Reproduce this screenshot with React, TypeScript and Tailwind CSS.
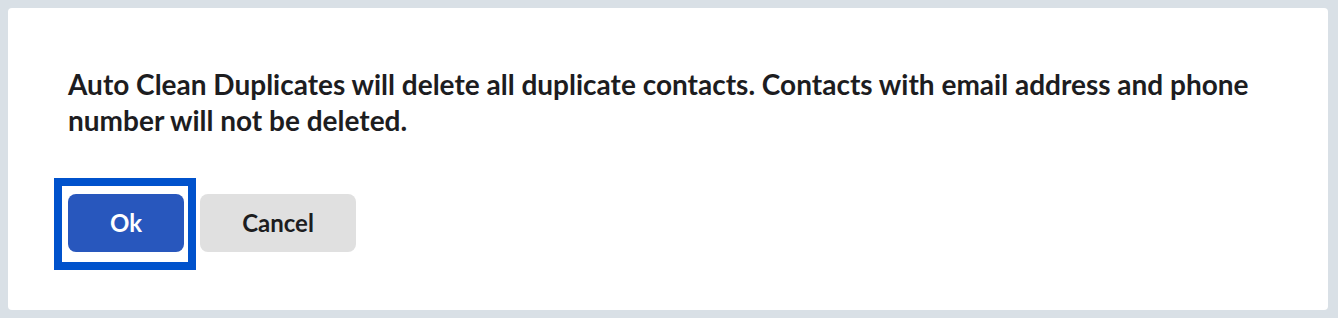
const App = () => {
  return (
    <div className="w-[1338px] h-[318px] bg-[#d9e0e6] pt-2 pl-2 pr-[10px] pb-2 font-['Lato',sans-serif]">
      <div className="h-full bg-white rounded-[4px] pl-[60px] pr-[60px] pt-[58px]">
        {/* message */}
        <p className="text-[28px] leading-[36px] font-bold text-[#1d1d1f]">
          Auto Clean Duplicates will delete all duplicate contacts. Contacts with email address and phone
          number will not be deleted.
        </p>
        {/* actions */}
        <div className="mt-[56px] flex gap-4">
          <button className="relative w-[116px] h-[58px] rounded-[8px] bg-[#2857bd] text-white text-[24px] font-bold">
            <span className="absolute -left-[14px] -right-[12px] -top-[16px] -bottom-[18px] border-8 border-[#0052cc]"></span>
            Ok
          </button>
          <button className="w-[156px] h-[58px] rounded-[8px] bg-[#e0e0e0] text-[#1d1d1f] text-[24px] font-bold">
            Cancel
          </button>
        </div>
      </div>
    </div>
  );
};

export default App;
